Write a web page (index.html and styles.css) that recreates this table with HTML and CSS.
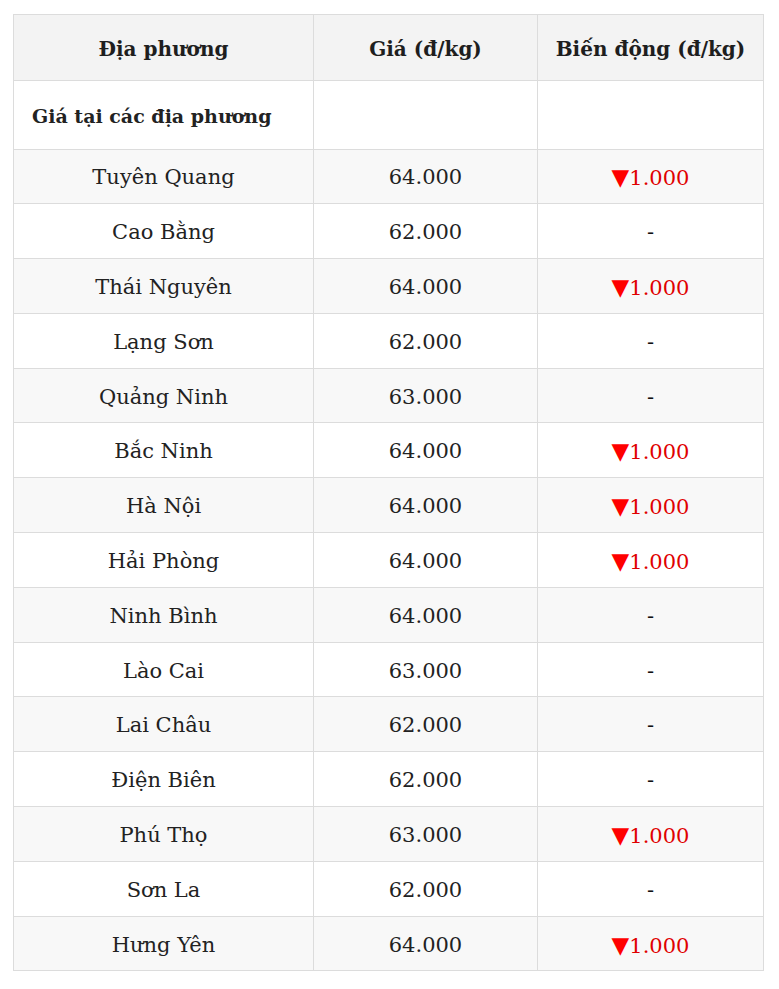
FILE: index.html
```html
<!DOCTYPE html>
<html lang="vi">
<head>
<meta charset="utf-8">
<title>Giá heo hơi</title>
<link rel="stylesheet" href="styles.css">
</head>
<body>
<table class="price-table">
  <colgroup>
    <col class="c1"><col class="c2"><col class="c3">
  </colgroup>
  <thead>
    <tr><th>Địa phương</th><th>Giá (đ/kg)</th><th>Biến động (đ/kg)</th></tr>
  </thead>
  <tbody>
    <tr class="group"><td class="group-title">Giá tại các địa phương</td><td></td><td></td></tr>
    <tr><td>Tuyên Quang</td><td>64.000</td><td class="down"><span class="tri">▼</span>1.000</td></tr>
    <tr><td>Cao Bằng</td><td>62.000</td><td class="flat">-</td></tr>
    <tr><td>Thái Nguyên</td><td>64.000</td><td class="down"><span class="tri">▼</span>1.000</td></tr>
    <tr><td>Lạng Sơn</td><td>62.000</td><td class="flat">-</td></tr>
    <tr><td>Quảng Ninh</td><td>63.000</td><td class="flat">-</td></tr>
    <tr><td>Bắc Ninh</td><td>64.000</td><td class="down"><span class="tri">▼</span>1.000</td></tr>
    <tr><td>Hà Nội</td><td>64.000</td><td class="down"><span class="tri">▼</span>1.000</td></tr>
    <tr><td>Hải Phòng</td><td>64.000</td><td class="down"><span class="tri">▼</span>1.000</td></tr>
    <tr><td>Ninh Bình</td><td>64.000</td><td class="flat">-</td></tr>
    <tr><td>Lào Cai</td><td>63.000</td><td class="flat">-</td></tr>
    <tr><td>Lai Châu</td><td>62.000</td><td class="flat">-</td></tr>
    <tr><td>Điện Biên</td><td>62.000</td><td class="flat">-</td></tr>
    <tr><td>Phú Thọ</td><td>63.000</td><td class="down"><span class="tri">▼</span>1.000</td></tr>
    <tr><td>Sơn La</td><td>62.000</td><td class="flat">-</td></tr>
    <tr><td>Hưng Yên</td><td>64.000</td><td class="down"><span class="tri">▼</span>1.000</td></tr>
  </tbody>
</table>
</body>
</html>
```

FILE: styles.css
```css
body {
  margin: 14px 0 0 13px;
  background: #fff;
  font-family: "DejaVu Serif", "Liberation Serif", serif;
  color: #222;
}
.price-table {
  width: 750px;
  border-collapse: collapse;
  table-layout: fixed;
  font-size: 21px;
}
.c1 { width: 300px; }
.c2 { width: 224px; }
.c3 { width: 226px; }
.price-table th,
.price-table td {
  border: 1px solid #dcdcdc;
  text-align: center;
  padding: 2px 10px 0;
  font-weight: normal;
}
.price-table th {
  background: #f3f3f3;
  font-weight: bold;
  font-size: 20px;
  height: 63px;
  color: #1e1e1e;
}
.price-table td {
  height: 51.8px;
}
.price-table tr.group td {
  height: 65.5px;
  background: #fff;
}
.price-table td.group-title {
  text-align: left;
  padding-left: 18px;
  font-weight: bold;
  font-size: 19px;
}
.price-table tbody tr:nth-child(even) td {
  background: #f8f8f8;
}
.down {
  color: #e00000;
}
.flat {
  font-weight: bold;
  color: #111;
}
.tri {
  color: #ff0000;
  font-family: "DejaVu Sans", sans-serif;
  font-size: 23px;
}
```
